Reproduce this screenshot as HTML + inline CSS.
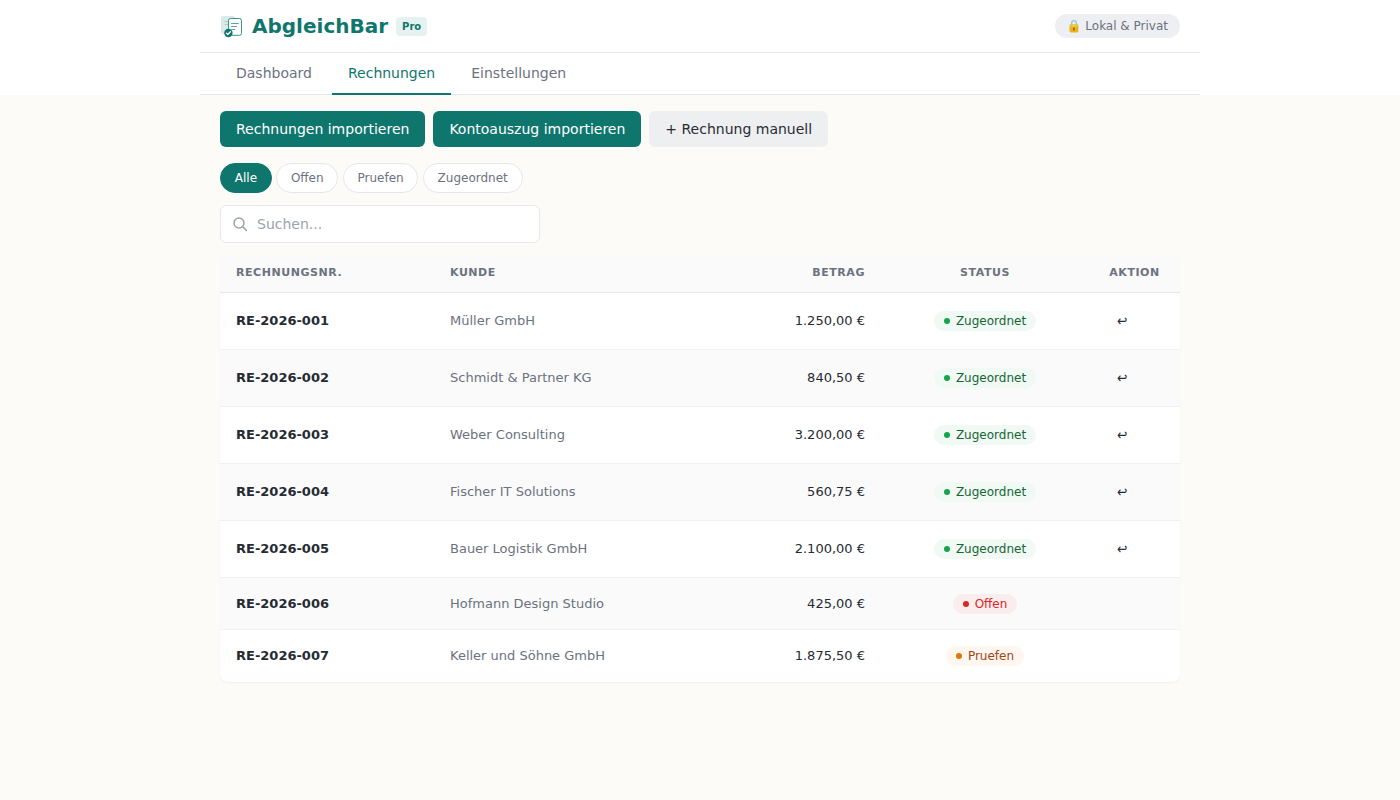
<!DOCTYPE html>
<html lang="de">
<head>
<meta charset="utf-8">
<title>AbgleichBar</title>
<style>
*{box-sizing:border-box;margin:0;padding:0}
html,body{width:1400px;height:800px;overflow:hidden}
body{font-family:"DejaVu Sans","Liberation Sans",sans-serif;background:#fcfbf8;color:#262b33;font-size:14px;line-height:1.5}
.top{background:#fff}
.wrap{width:1000px;margin:0 auto;padding:0 20px}
header{height:53px;border-bottom:1px solid #e5e7eb;display:flex;align-items:center;justify-content:space-between}
.brand{display:flex;align-items:center}
.brand svg{display:block;margin-right:8px}
.brand h1{font-size:20px;font-weight:700;color:#0f766e;letter-spacing:0;line-height:1}
.pro{margin-left:8px;background:#e6f2f0;color:#0f766e;font-size:10px;font-weight:700;padding:2px 6px;border-radius:4px;line-height:15px}
.pill{background:#eeeff2;color:#6b7280;font-size:12px;height:24px;line-height:24px;border-radius:12px;padding:0 12px;display:flex;align-items:center}
.pill svg{margin-right:3.8px}
nav{height:42px;border-bottom:1px solid #e5e7eb;display:flex}
nav a{display:block;padding:0 16px;margin-right:4px;height:42px;line-height:40px;font-size:14px;color:#6b7280;text-decoration:none;border-bottom:2px solid transparent}
nav a.on{color:#0f766e;border-bottom-color:#0f766e}
main{padding-top:16px}
.btns{display:flex;gap:8px}
.btn{height:36px;line-height:36px;padding:0 16px;border-radius:6px;font-size:14px;background:#0f766e;color:#fff;border:0;font-family:inherit}
.btn.sec{background:#eeeff1;color:#2a2c33}
.filters{display:flex;gap:4.4px;margin-top:16px}
.chip{height:30px;line-height:28px;padding:0 13.75px;border-radius:15px;border:1px solid #e5e7eb;background:#fff;color:#6b7280;font-size:12px}
.chip.on{background:#0f766e;border-color:#0f766e;color:#fff}
.search{margin-top:12px;width:320px;height:38px;border:1px solid #e5e7eb;border-radius:6px;background:#fff;display:flex;align-items:center;padding:0 11px;color:#9ca3af;font-size:14px}
.search svg{margin-right:9px}
.card{margin-top:12px;background:#fff;border-radius:8px;overflow:hidden;box-shadow:0 1px 2px rgba(0,0,0,.05)}
table{width:100%;border-collapse:separate;border-spacing:0}
th{background:#fafafa;height:38px;font-size:11px;font-weight:700;letter-spacing:.55px;color:#6b7280;text-align:left;padding:0 16px;border-bottom:1px solid #e5e7eb}
td{padding:0 16px;font-size:13px;border-bottom:1px solid #f0f1f3;height:57px}
tr.s td{height:52px}
tr:last-child td{border-bottom:0}
tr:nth-child(even) td{background:#fafafa}
td.nr{font-weight:700;color:#262b33}
td.k{color:#6b7280}
.r{text-align:right}
.c{text-align:center}
.badge{display:inline-flex;align-items:center;height:20px;padding:0 10px;border-radius:10px;font-size:12px}
.badge i{width:6px;height:6px;border-radius:50%;margin-right:6px;display:inline-block}
.g{background:#f0f9f4;color:#166534}.g i{background:#16a34a}
.o{background:#faeded;color:#dc2626}.o i{background:#dc2626}
.p{background:#fef6ef;color:#9f4718}.p i{background:#d97706}
tr:not(.s) .badge,tr:last-child .badge{position:relative;top:-.5px}
.act{display:inline-block;padding:0 7px 0 11.6px;font-size:13px;color:#262b33}
.act b{display:inline-block;font-weight:400;font-size:15px;line-height:20px;transform:scaleX(.82);transform-origin:0 50%;position:relative;top:0px}
</style>
</head>
<body>
<div class="top">
<div class="wrap" style="padding:0">
<header style="padding:0 20px">
  <div class="brand">
    <svg width="24" height="24" viewBox="0 0 24 24" fill="none">
      <rect x="1" y="2" width="14" height="18" rx="2" fill="#d9ebe8"/>
      <path d="M4.5 7.5h5M4.5 10.5h5" stroke="#a9cfc9" stroke-width="1"/>
      <rect x="8.5" y="4.5" width="13" height="16.8" rx="2" fill="#fff" stroke="#0f766e" stroke-opacity=".8" stroke-width="1"/>
      <path d="M11.2 9.5h7.6M11.2 12.5h5.6M11.2 15.5h4" stroke="#5fa59d" stroke-width="1"/>
      <circle cx="8.4" cy="19" r="4.2" fill="#0f766e"/>
      <path d="M6.4 19.1l1.4 1.4 2.6-2.8" stroke="#fff" stroke-width="1.3" fill="none" stroke-linecap="round" stroke-linejoin="round"/>
    </svg>
    <h1>AbgleichBar</h1><span class="pro">Pro</span>
  </div>
  <div class="pill">
    <svg width="15" height="24" viewBox="0 0 15 24"><rect x="2.5" y="10.3" width="8.9" height="8.2" rx="1.4" fill="#eeb31b"/><rect x="3.3" y="10.4" width="7.3" height="2.2" rx="1.1" fill="#fdd630"/><path d="M4.7 11.7V8.9a2.3 2.3 0 0 1 4.6 0V11.7" fill="none" stroke="#9cc3d3" stroke-width="1.4"/><rect x="6.2" y="13.6" width="1.5" height="3.1" rx=".7" fill="#8d6113"/></svg>
    <span>Lokal &amp; Privat</span>
  </div>
</header>
<nav style="padding:0 20px">
  <a>Dashboard</a><a class="on">Rechnungen</a><a>Einstellungen</a>
</nav>
</div>
</div>
<div class="wrap">
<main>
  <div class="btns">
    <div class="btn">Rechnungen importieren</div>
    <div class="btn">Kontoauszug importieren</div>
    <div class="btn sec">+ Rechnung manuell</div>
  </div>
  <div class="filters">
    <div class="chip on">Alle</div><div class="chip">Offen</div><div class="chip">Pruefen</div><div class="chip">Zugeordnet</div>
  </div>
  <div class="search">
    <svg width="16" height="16" viewBox="0 0 16 16" fill="none" stroke="#9ca3af" stroke-width="1.5" stroke-linecap="round"><circle cx="7" cy="7" r="5"/><path d="M10.7 10.7l3.7 3.7"/></svg>
    <span>Suchen...</span>
  </div>
  <div class="card">
  <table>
    <thead><tr><th style="width:214px">RECHNUNGSNR.</th><th>KUNDE</th><th class="r" style="width:150px">BETRAG</th><th class="c" style="width:208px">STATUS</th><th class="c" style="width:91px">AKTION</th></tr></thead>
    <tbody>
      <tr><td class="nr">RE-2026-001</td><td class="k">Müller GmbH</td><td class="r">1.250,00 €</td><td class="c"><span class="badge g"><i></i>Zugeordnet</span></td><td><span class="act"><b>↩</b></span></td></tr>
      <tr><td class="nr">RE-2026-002</td><td class="k">Schmidt &amp; Partner KG</td><td class="r">840,50 €</td><td class="c"><span class="badge g"><i></i>Zugeordnet</span></td><td><span class="act"><b>↩</b></span></td></tr>
      <tr><td class="nr">RE-2026-003</td><td class="k">Weber Consulting</td><td class="r">3.200,00 €</td><td class="c"><span class="badge g"><i></i>Zugeordnet</span></td><td><span class="act"><b>↩</b></span></td></tr>
      <tr><td class="nr">RE-2026-004</td><td class="k">Fischer IT Solutions</td><td class="r">560,75 €</td><td class="c"><span class="badge g"><i></i>Zugeordnet</span></td><td><span class="act"><b>↩</b></span></td></tr>
      <tr><td class="nr">RE-2026-005</td><td class="k">Bauer Logistik GmbH</td><td class="r">2.100,00 €</td><td class="c"><span class="badge g"><i></i>Zugeordnet</span></td><td><span class="act"><b>↩</b></span></td></tr>
      <tr class="s"><td class="nr">RE-2026-006</td><td class="k">Hofmann Design Studio</td><td class="r">425,00 €</td><td class="c"><span class="badge o"><i></i>Offen</span></td><td></td></tr>
      <tr class="s"><td class="nr">RE-2026-007</td><td class="k">Keller und Söhne GmbH</td><td class="r">1.875,50 €</td><td class="c"><span class="badge p"><i></i>Pruefen</span></td><td></td></tr>
    </tbody>
  </table>
  </div>
</main>
</div>
</body>
</html>
